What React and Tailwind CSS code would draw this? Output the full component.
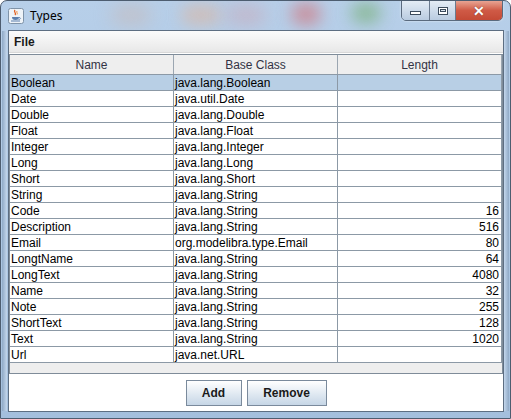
import React from "react";

const rows = [
  ["Boolean", "java.lang.Boolean", ""],
  ["Date", "java.util.Date", ""],
  ["Double", "java.lang.Double", ""],
  ["Float", "java.lang.Float", ""],
  ["Integer", "java.lang.Integer", ""],
  ["Long", "java.lang.Long", ""],
  ["Short", "java.lang.Short", ""],
  ["String", "java.lang.String", ""],
  ["Code", "java.lang.String", "16"],
  ["Description", "java.lang.String", "516"],
  ["Email", "org.modelibra.type.Email", "80"],
  ["LongtName", "java.lang.String", "64"],
  ["LongText", "java.lang.String", "4080"],
  ["Name", "java.lang.String", "32"],
  ["Note", "java.lang.String", "255"],
  ["ShortText", "java.lang.String", "128"],
  ["Text", "java.lang.String", "1020"],
  ["Url", "java.net.URL", ""],
];

const JavaIcon = () => (
  <svg width="16" height="16" viewBox="0 0 16 16">
    <rect x="0.5" y="0.5" width="15" height="15" rx="2" fill="#eef3f8" stroke="#7f93a8" />
    <path d="M7 2 C5 4 9 5 7 7" stroke="#e05a1a" strokeWidth="1.3" fill="none" />
    <path d="M9 3 C8 4.5 10 5 9 6.5" stroke="#f08a3a" strokeWidth="1" fill="none" />
    <path d="M4 9 H11 C11 11 10 12 7.5 12 C5 12 4 11 4 9 Z" fill="#5b7fae" />
    <path d="M11 9.5 C13 9.5 13 11.5 10.5 11.5" stroke="#5b7fae" strokeWidth="0.9" fill="none" />
    <path d="M3 13 H12" stroke="#5b7fae" strokeWidth="1" />
  </svg>
);

const App = () => {
  return (
    <div
      className="relative w-[511px] h-[419px] overflow-hidden bg-gradient-to-b from-[#b7cfe9] via-[#aec8e4] to-[#a4bfdd] rounded-t-[7px] border border-[#4d5d70]"
      style={{ fontFamily: '"Liberation Sans", Arial, sans-serif' }}
    >
      {/* blurred desktop behind the glass title bar */}
      <div className="absolute left-[180px] top-[4px] w-[40px] h-[20px] rounded-full bg-[#d8b8a8] blur-[8px] opacity-70" />
      <div className="absolute left-[290px] top-[2px] w-[30px] h-[22px] rounded-full bg-[#d07880] blur-[8px] opacity-70" />
      <div className="absolute left-[225px] top-[4px] w-[40px] h-[20px] rounded-full bg-[#c9a9b9] blur-[9px] opacity-60" />
      <div className="absolute left-[350px] top-[2px] w-[30px] h-[20px] rounded-full bg-[#78b078] blur-[8px] opacity-70" />
      <div className="absolute left-[110px] top-[4px] w-[40px] h-[20px] rounded-full bg-[#cbb6b0] blur-[9px] opacity-50" />
      <div className="absolute left-[1px] top-[30px] w-[5px] h-[380px] bg-gradient-to-r from-[#8fa9c6] to-[#c4d7ec]" />
      <div className="absolute right-[1px] top-[30px] w-[5px] h-[380px] bg-gradient-to-l from-[#8fa9c6] to-[#c4d7ec]" />

      {/* title bar */}
      <div className="relative flex items-center h-[29px] pl-[7px]">
        <JavaIcon />
        <span
          className="ml-[6px] text-[12px] text-black"
          style={{ fontFamily: '"Noto Sans", "Open Sans", sans-serif' }}
        >
          Types
        </span>
      </div>

      {/* caption buttons */}
      <div className="absolute top-[-1px] left-[400px] flex h-[21px] rounded-b-[5px] border border-[#5a6a7e] overflow-hidden shadow-[0_0_2px_rgba(255,255,255,0.8)]">
        <div className="w-[28px] flex items-center justify-center bg-gradient-to-b from-[#e4ecf5] to-[#b9cbe0] border-r border-[#6a7a8e]">
          <div className="w-[11px] h-[4px] mt-[5px] bg-white border border-[#3c4b5c]" />
        </div>
        <div className="w-[26px] flex items-center justify-center bg-gradient-to-b from-[#e4ecf5] to-[#b9cbe0] border-r border-[#6a7a8e]">
          <div className="w-[10px] h-[8px] bg-white border border-[#3c4b5c] flex items-center justify-center">
            <div className="w-[6px] h-[3px] border border-[#3c4b5c] bg-[#dde6f0]" />
          </div>
        </div>
        <div className="w-[46px] flex items-center justify-center bg-gradient-to-b from-[#e8a493] via-[#cf5a46] to-[#c44a36]">
          <span className="text-white text-[14px] font-bold leading-none" style={{ textShadow: "0 0 1px #5a1a10" }}>
            ✕
          </span>
        </div>
      </div>

      {/* client area */}
      <div className="absolute left-[7px] top-[29px] w-[496px] h-[382px] border border-[#5d6e82] bg-white flex flex-col">
        {/* menu bar */}
        <div className="h-[22px] flex items-center pl-[5px] bg-gradient-to-b from-[#fbfbfb] to-[#e8e8e8] border-b border-[#d8d8d8]">
          <span className="text-[12px] font-bold text-[#1a1a1a]">File</span>
        </div>

        {/* table scroll pane */}
        <div className="mt-[1px] w-[494px] border border-[#7f8c99] bg-[#eeeeee] flex flex-col">
          <div className="grid grid-cols-[164px_164px_164px] h-[20px] bg-[#eeeeee] border-b border-[#8c99a6]">
            {["Name", "Base Class", "Length"].map((h) => (
              <div
                key={h}
                className="flex items-center justify-center pt-[1px] text-[12px] text-[#333344] border-r border-[#9ba6b1]"
              >
                {h}
              </div>
            ))}
          </div>
          {rows.map(([name, base, len], i) => (
            <div
              key={name}
              className={`grid grid-cols-[164px_164px_164px] h-[16px] border-b border-[#8c99a6] text-[12px] leading-[16px] text-black ${
                i === 0 ? "bg-[#b8cfe5]" : "bg-white"
              }`}
            >
              <div className="pl-[1px] border-r border-[#8c99a6] whitespace-nowrap overflow-hidden">{name}</div>
              <div className="pl-[1px] border-r border-[#8c99a6] whitespace-nowrap overflow-hidden">{base}</div>
              <div className="pr-[2px] text-right border-r border-[#8c99a6]">{len}</div>
            </div>
          ))}
          <div className="h-[10px] bg-[#eeeeee]" />
        </div>

        {/* buttons */}
        <div className="flex-1 flex items-start justify-center gap-[5px] pt-[6px]">
          <button className="w-[56px] h-[26px] border border-[#7a8a9c] bg-gradient-to-b from-[#ffffff] to-[#c6d6e6] text-[12px] font-bold text-[#1a1a1a]">
            Add
          </button>
          <button className="w-[80px] h-[26px] border border-[#7a8a9c] bg-gradient-to-b from-[#ffffff] to-[#c6d6e6] text-[12px] font-bold text-[#1a1a1a]">
            Remove
          </button>
        </div>
      </div>
    </div>
  );
};

export default App;
